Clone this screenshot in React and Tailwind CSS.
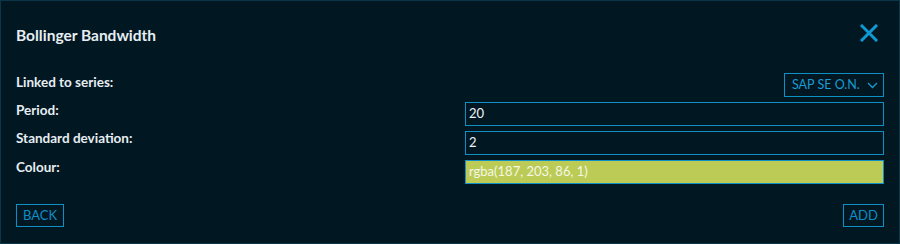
import React from "react";

const font = { fontFamily: "Lato, 'Noto Sans', sans-serif" };

export default function App() {
  return (
    <div
      className="w-[900px] h-[244px] border border-[#0b3647] bg-[#011722] text-[13px] text-[#e6eef2] flex flex-col"
      style={font}
    >
      <div className="flex items-center justify-between pl-[15px] pr-[21px] pt-[22px] h-[50px]">
        <span className="font-bold text-[15.5px] leading-[16px] mt-[-4px]">Bollinger Bandwidth</span>
        <svg width="18" height="18" viewBox="0 0 18 18" className="text-[#0e9ad4] mb-[9px]">
          <path d="M2 2 L16 16 M16 2 L2 16" stroke="currentColor" strokeWidth="3" strokeLinecap="square" />
        </svg>
      </div>
      <div className="flex flex-col pl-[15px] pr-[15px] mt-[22px] gap-[5px]">
        <div className="flex justify-between items-start h-[24px]">
          <span className="font-bold text-[13.5px] leading-[16px] mt-[1px]">Linked to series:</span>
          <div className="w-[100px] h-[24px] border border-[#0e8fc6] flex items-center pl-[7px] pr-[5px] text-[#1a9bd2] whitespace-nowrap">
            <span className="text-[12.5px] flex-1">SAP SE O.N.</span>
            <svg width="11" height="7" viewBox="0 0 11 7" className="shrink-0 ml-[6px]">
              <path d="M1 1 L5.5 5.5 L10 1" stroke="currentColor" strokeWidth="1.3" fill="none" />
            </svg>
          </div>
        </div>
        <div className="flex justify-between items-start h-[24px]">
          <span className="font-bold text-[13.5px] leading-[16px] mt-[0px]">Period:</span>
          <div className="w-[419px] h-[24px] border border-[#0e8fc6] flex items-center px-[3px] text-[#f0f4f6]">20</div>
        </div>
        <div className="flex justify-between items-start h-[24px]">
          <span className="font-bold text-[13.5px] leading-[16px] mt-[-1px]">Standard deviation:</span>
          <div className="w-[419px] h-[24px] border border-[#0e8fc6] flex items-center px-[3px] text-[#f0f4f6]">2</div>
        </div>
        <div className="flex justify-between items-start h-[24px]">
          <span className="font-bold text-[13.5px] leading-[16px] mt-[-1px]">Colour:</span>
          <div className="w-[419px] h-[24px] border border-[#0e8fc6] bg-[#bbcb56] flex items-center px-[3px] text-[#f4f7e6]">
            rgba(187, 203, 86, 1)
          </div>
        </div>
      </div>
      <div className="flex justify-between items-center pl-[15px] pr-[15px] mt-[20px]">
        <button className="h-[23px] w-[48px] border border-[#0e8fc6] text-[#0e8fc6] text-[13px] flex items-center justify-center">
          BACK
        </button>
        <button className="h-[23px] w-[41px] border border-[#0e8fc6] text-[#0e8fc6] text-[13px] flex items-center justify-center">
          ADD
        </button>
      </div>
    </div>
  );
}
